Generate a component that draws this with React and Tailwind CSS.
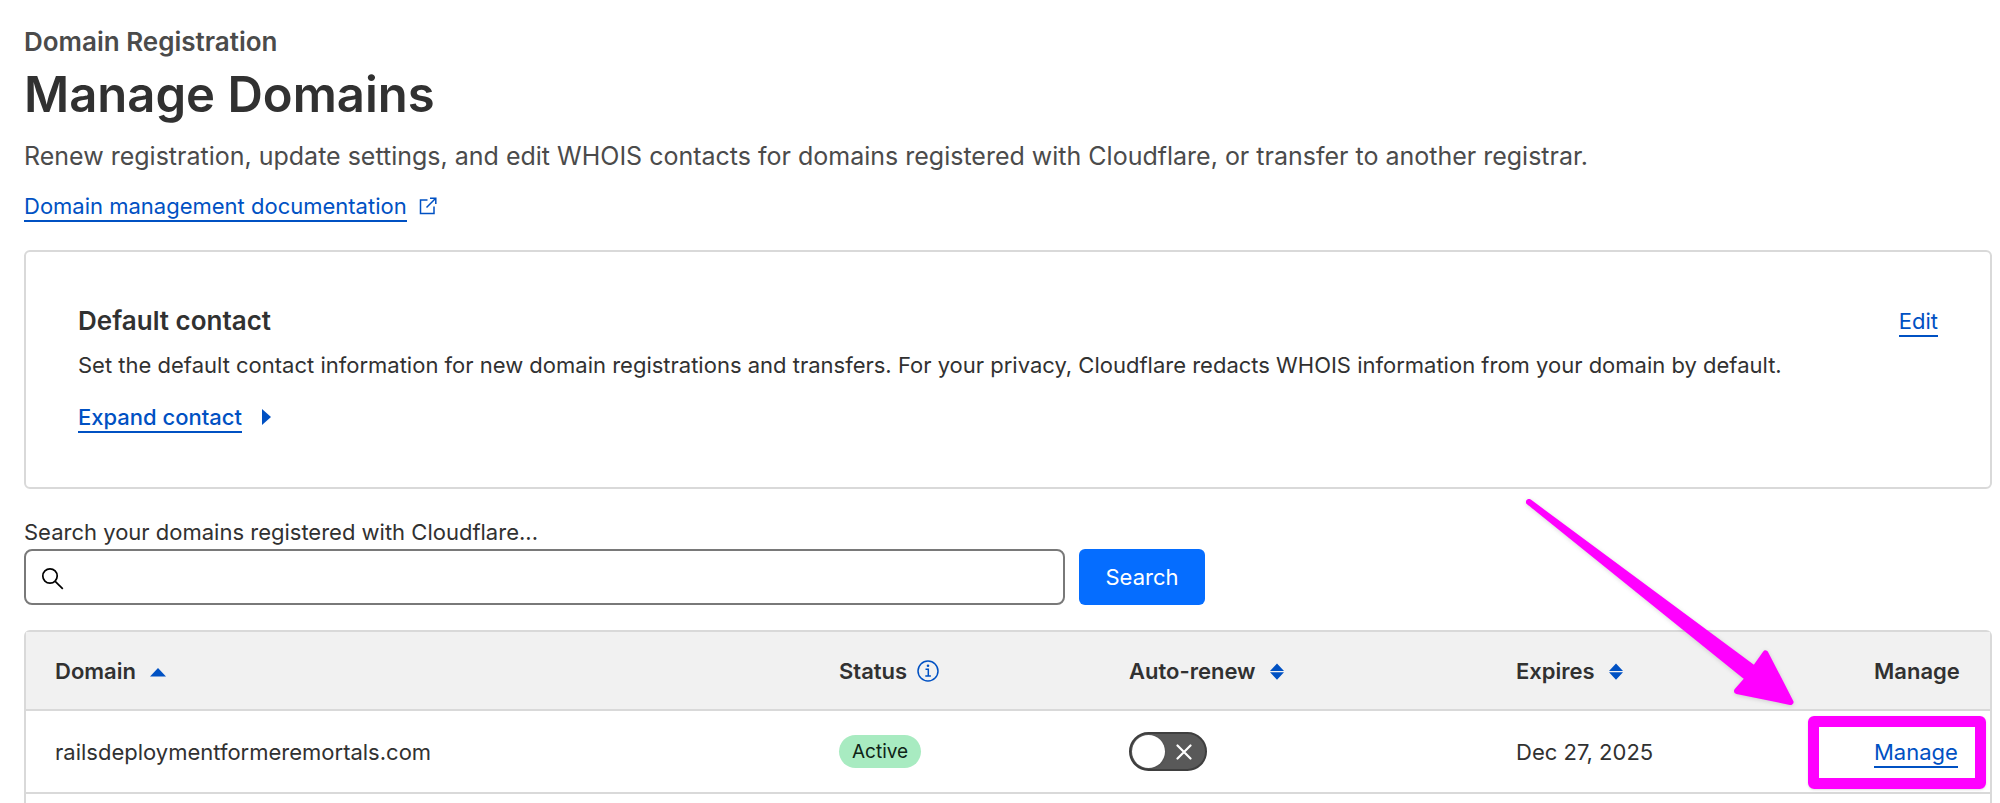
import { useState } from 'react';

const domains = [
    { name: 'railsdeploymentformeremortals.com', status: 'Active', autoRenew: false, expires: 'Dec 27, 2025' },
];

const TextLink = ({ children }) => (
    <a href="#" className="text-[#0051c3] border-b-2 border-[#0051c3] pb-px">{children}</a>
);

const ExternalIcon = () => (
    <svg width="18" height="18" viewBox="0 0 18 18" fill="none" stroke="#0051c3" strokeWidth="1.5">
        <path d="M8.5 3H1.5v13.5H15V9.5" />
        <path d="M7.5 10.5 16.5 1.5M11 1.2h5.8V7" />
    </svg>
);

const SearchIcon = () => (
    <svg width="24" height="24" viewBox="0 0 24 24" fill="none" stroke="#000" strokeWidth="1.7" className="absolute left-4 top-4 mt-px pointer-events-none">
        <circle cx="10" cy="10" r="7.2" />
        <path d="m15.2 15.4 7.6 7.4" />
    </svg>
);

const InfoIcon = () => (
    <svg width="22" height="22" viewBox="0 0 22 22" fill="none" stroke="#0051c3" strokeWidth="1.5">
        <circle cx="11" cy="11" r="10" />
        <path d="M8.5 9.2h2.8v6.6M8.3 15.9h5.6" />
        <circle cx="11" cy="5.8" r="1.3" fill="#0051c3" stroke="none" />
    </svg>
);

const SortAsc = () => (
    <svg width="16" height="18" viewBox="0 0 16 18" fill="#0051c3">
        <path d="M8 6 16 14.5H0z" />
    </svg>
);

const SortBoth = () => (
    <svg width="14" height="18" viewBox="0 0 14 18" fill="#0051c3">
        <path d="M7 1.5 14 9H0zM0 10.2h14L7 17.8z" />
    </svg>
);

const Toggle = ({ label, checked, onChange }) => (
    <label className="relative flex w-[78px] h-[39px] items-center rounded-full border-2 border-[#3f3f3f] bg-[#595959] px-px cursor-pointer">
        <input type="checkbox" role="switch" aria-label={label} checked={checked} onChange={onChange} className="peer sr-only" />
        <span className="size-[33px] rounded-full bg-white shadow peer-checked:order-last"></span>
        <svg width="16" height="16" viewBox="0 0 16 16" stroke="#fff" strokeWidth="2.2" strokeLinecap="round" className="ml-[11px]">
            <path d="M1.5 1.5 14.5 14.5M14.5 1.5 1.5 14.5" />
        </svg>
    </label>
);

// Arrow and frame drawn over the Manage link
const Callout = () => (
    <>
        <svg width="276" height="214" viewBox="0 0 276 214" className="absolute right-[188px] bottom-[79px] pointer-events-none drop-shadow-sm">
            <path d="M3 3 228.5 170 239.5 154.5 264.5 203 211 192 222 179.5z" fill="#ff00ff" stroke="#ff00ff" strokeWidth="6" strokeLinejoin="round" />
        </svg>
        <div className="absolute right-1 top-[5px] bottom-[3px] w-[178px] rounded-md border-[11px] border-[#ff00ff] shadow-sm pointer-events-none"></div>
    </>
);

export default function App() {
    const [rows, setRows] = useState(domains);
    const [query, setQuery] = useState('');

    const toggleRenew = (name) => {
        setRows(rows.map(r => r.name === name ? { ...r, autoRenew: !r.autoRenew } : r));
    };

    return (
        <main className="flex flex-col min-h-screen overflow-hidden bg-white pt-[27px] px-6 pr-2 font-['Inter',sans-serif] text-[22px] leading-[28px] text-[#313131]">
            <header>
                <p className="text-[26px] leading-[30px] font-semibold text-[#4b4b4b]">Domain Registration</p>
                <h1 className="mt-2 text-[49px] leading-[60px] font-semibold">Manage Domains</h1>
                <p className="mt-[15px] text-[25px] leading-[32px] text-[#4b4b4b]">
                    Renew registration, update settings, and edit WHOIS contacts for domains registered with Cloudflare, or transfer to another registrar.
                </p>
                <p className="mt-5 flex items-center gap-3">
                    <span><TextLink>Domain management documentation</TextLink></span>
                    <ExternalIcon />
                </p>
            </header>

            <section className="mt-[30px] flex justify-between rounded-md border-2 border-[#d9d9d9] px-[52px] pt-[53px] pb-14">
                <div>
                    <h2 className="text-[26px] leading-[32px] font-semibold">Default contact</h2>
                    <p className="mt-[14px]">
                        Set the default contact information for new domain registrations and transfers. For your privacy, Cloudflare redacts WHOIS information from your domain by default.
                    </p>
                    <p className="mt-6 flex items-center gap-5 font-medium">
                        <span><TextLink>Expand contact</TextLink></span>
                        <svg width="9" height="16" viewBox="0 0 9 16" fill="#0051c3"><path d="M0 0 9 8 0 16z" /></svg>
                    </p>
                </div>
                <div className="shrink-0 pt-[2px]"><TextLink>Edit</TextLink></div>
            </section>

            <form className="mt-[29px]" onSubmit={e => e.preventDefault()}>
                <label htmlFor="domain-search" className="block">Search your domains registered with Cloudflare...</label>
                <div className="mt-[3px] flex gap-[14px]">
                    <div className="relative w-[1041px]">
                        <SearchIcon />
                        <input
                            id="domain-search"
                            type="text"
                            className="h-14 w-full rounded-lg border-2 border-[#797979] pl-14 pr-4 outline-none"
                            value={query}
                            onChange={e => setQuery(e.target.value)}
                        />
                    </div>
                    <button type="submit" className="h-14 w-[126px] rounded-md bg-[#056dff] text-white">Search</button>
                </div>
            </form>

            <section className="mt-[25px] flex-1 rounded-t-md border-2 border-b-0 border-[#d9d9d9]">
                <table className="w-full table-fixed text-left">
                    <colgroup>
                        <col />
                        <col className="w-[290px]" />
                        <col className="w-[387px]" />
                        <col className="w-[358px]" />
                        <col className="w-[145px]" />
                    </colgroup>
                    <thead>
                        <tr className="h-[78px] border-b-2 border-[#d9d9d9] bg-[#f1f1f1] *:pl-[29px] *:font-semibold">
                            <th><div className="flex items-center gap-[14px]">Domain <SortAsc /></div></th>
                            <th><div className="flex items-center gap-[10px]">Status <InfoIcon /></div></th>
                            <th><div className="flex items-center gap-[14px]">Auto-renew <SortBoth /></div></th>
                            <th><div className="flex items-center gap-[14px]">Expires <SortBoth /></div></th>
                            <th>Manage</th>
                        </tr>
                    </thead>
                    <tbody>
                        {rows.map(row => (
                            <tr key={row.name} className="h-[83px] border-b-2 border-[#d9d9d9] *:pl-[29px]">
                                <td>{row.name}</td>
                                <td>
                                    <span className="flex h-[33px] w-fit items-center rounded-full bg-[#a8ebc1] px-[13px] text-[19px] text-[#0f2417]">{row.status}</span>
                                </td>
                                <td><Toggle label={`Auto-renew ${row.name}`} checked={row.autoRenew} onChange={() => toggleRenew(row.name)} /></td>
                                <td>{row.expires}</td>
                                <td className="relative">
                                    <TextLink>Manage</TextLink>
                                    <Callout />
                                </td>
                            </tr>
                        ))}
                    </tbody>
                </table>
            </section>
        </main>
    );
}
